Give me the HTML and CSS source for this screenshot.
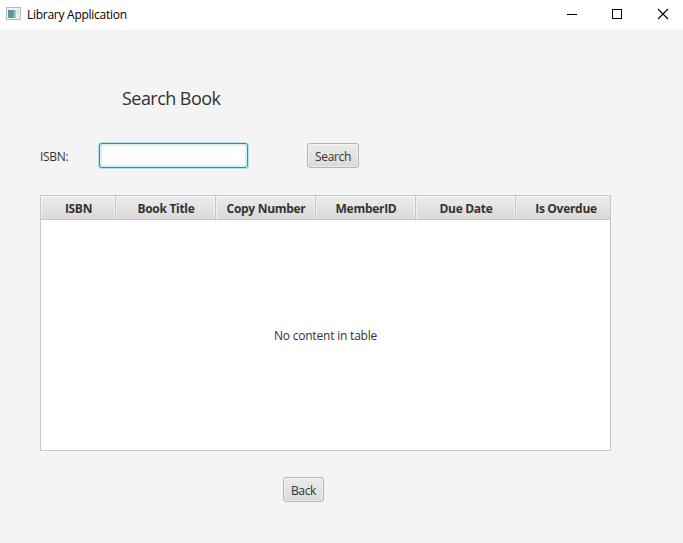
FILE: index.html
```html
<!DOCTYPE html>
<html lang="en">
<head>
<meta charset="utf-8">
<title>Library Application</title>
<link rel="stylesheet" href="styles.css">
</head>
<body>
<header class="titlebar">
  <svg class="app-icon" width="16" height="14" viewBox="0 0 16 14">
    <defs>
      <linearGradient id="pane" x1="0" y1="0" x2="0.6" y2="1"><stop offset="0" stop-color="#5b87b8"/><stop offset="1" stop-color="#4faa83"/></linearGradient>
    </defs>
    <rect x="0.5" y="0.5" width="14" height="12" fill="#eef1f2" stroke="#b4b9bc"/>
    <rect x="2" y="3" width="6" height="8" fill="url(#pane)"/>
    <rect x="8" y="3" width="2" height="8" fill="#a9c3c6"/>
    <rect x="11" y="3" width="2" height="5" fill="#d9dfe1"/>
  </svg>
  <span class="app-name">Library Application</span>
  <div class="controls">
    <svg width="46" height="30" viewBox="0 0 46 30"><path d="M18 14.5h10" stroke="#000"/></svg>
    <svg width="46" height="30" viewBox="0 0 46 30"><rect x="17.5" y="9.5" width="9" height="9" fill="none" stroke="#000"/></svg>
    <svg width="46" height="30" viewBox="0 0 46 30"><path d="M17 9l10 10M27 9l-10 10" stroke="#000" stroke-width="1.1"/></svg>
  </div>
</header>
<main class="content">
  <h1 class="heading">Search Book</h1>
  <form class="search">
    <label class="label" for="isbn">ISBN:</label>
    <input class="field" id="isbn" type="text">
    <button class="button search-button" type="button"><span>Search</span></button>
  </form>
  <section class="table">
    <div class="head">
      <div class="cell">ISBN</div>
      <div class="cell">Book Title</div>
      <div class="cell">Copy Number</div>
      <div class="cell">MemberID</div>
      <div class="cell">Due Date</div>
      <div class="cell">Is Overdue</div>
    </div>
    <div class="empty"><span>No content in table</span></div>
  </section>
  <button class="button back-button" type="button"><span>Back</span></button>
</main>
</body>
</html>
```
FILE: styles.css
```css
* { box-sizing: border-box; }
body {
  margin: 0;
  width: 683px;
  height: 543px;
  overflow: hidden;
  background: #f4f4f4;
  color: #333;
  font: 12px/16px "Open Sans", "Noto Sans", sans-serif;
}
.titlebar {
  display: flex;
  align-items: center;
  height: 30px;
  padding-left: 6px;
  background: #fff;
  color: #000;
}
.app-icon { margin-top: -2px; }
.app-name { margin-left: 5px; font-size: 12px; letter-spacing: -0.27px; white-space: nowrap; }
.controls { display: flex; margin-left: auto; margin-right: -4px; }
.content { display: flex; flex-direction: column; align-items: flex-start; padding-left: 40px; }
.heading { margin: 55px 0 0 82px; font-size: 18px; line-height: 26px; font-weight: 400; letter-spacing: -0.55px; white-space: nowrap; }
.search { display: flex; align-items: center; height: 25px; margin: 32px 0 0; }
.label { width: 59px; padding-top: 2px; letter-spacing: -0.3px; }
.field {
  width: 149px;
  height: 25px;
  border: 1px solid #039ed3;
  border-radius: 3px;
  outline: none;
  background: #fff;
  box-shadow: 0 0 0 1px #b6deeb, inset 0 0 0 2px #d9eff6;
}
.button {
  height: 25px;
  padding: 2px 0 0;
  border: 1px solid #b5b5b5;
  border-radius: 3px;
  background: linear-gradient(#ececec, #dadada);
  box-shadow: inset 0 0 0 1px rgba(255, 255, 255, 0.45);
  color: #333;
  font: 12px/16px "Open Sans", "Noto Sans", sans-serif;
  letter-spacing: -0.35px;
  white-space: nowrap;
}
.search-button { width: 52px; margin-left: 59px; }
.back-button { width: 41px; margin: 26px 0 0 243px; }
.table { display: flex; flex-direction: column; width: 571px; height: 256px; margin-top: 27px; border: 1px solid #c8c8c8; background: #fff; }
.head {
  display: grid;
  grid-template-columns: 75px 100px 100px 100px 100px 100px;
  height: 24px;
  overflow: hidden;
  border-bottom: 1px solid #c4c4c4;
  background: linear-gradient(#ececec, #dadada);
}
.cell {
  display: flex;
  align-items: center;
  justify-content: center;
  padding: 3px 0 0 1px;
  border-right: 1px solid #c4c4c4;
  box-shadow: inset 1px 1px rgba(255, 255, 255, 0.5), inset -1px 0 rgba(255, 255, 255, 0.5);
  font-weight: 700;
  letter-spacing: -0.3px;
  white-space: nowrap;
}
.empty { display: flex; flex: 1; align-items: center; justify-content: center; padding-top: 2px; letter-spacing: -0.2px; }
```
